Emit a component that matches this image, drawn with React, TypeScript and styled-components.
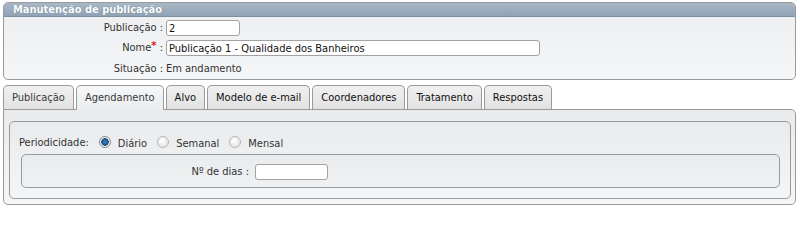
import styled, { createGlobalStyle } from "styled-components"

const GlobalStyle = createGlobalStyle`
  html, body {
    margin: 0;
    padding: 0;
    background: #ffffff;
  }
  body {
    font-family: "DejaVu Sans Condensed", "DejaVu Sans", sans-serif;
    font-size: 11px;
    color: #333333;
  }
  * {
    box-sizing: border-box;
  }
`

const tabs = [
  { label: "Publicação", visited: true },
  { label: "Agendamento", visited: true, active: true },
  { label: "Alvo" },
  { label: "Modelo de e-mail" },
  { label: "Coordenadores" },
  { label: "Tratamento" },
  { label: "Respostas" },
]

const periods = ["Diário", "Semanal", "Mensal"]

export default function App() {
  return (
    <Page>
      <GlobalStyle />

      {/* cabeçalho com os dados da publicação */}
      <Panel>
        <PanelHeader>Manutenção de publicação</PanelHeader>
        <FormGrid>
          <Label>Publicação :</Label>
          <Field $width="74px" defaultValue="2" />

          <Label>
            Nome<Required>*</Required> :
          </Label>
          <Field $width="374px" defaultValue="Publicação 1 - Qualidade dos Banheiros" />

          <Label $tall>Situação :</Label>
          <Value>Em andamento</Value>
        </FormGrid>
      </Panel>

      {/* abas */}
      <TabBar>
        {tabs.map((t) => (
          <Tab key={t.label} $active={t.active} $visited={t.visited}>
            {t.label}
          </Tab>
        ))}
      </TabBar>

      <TabPanel>
        <Fieldset>
          <RadioRow>
            <RowLabel>Periodicidade:</RowLabel>
            {periods.map((p, i) => (
              <RadioOption key={p}>
                <Radio type="radio" name="periodicidade" defaultChecked={i === 0} />
                <span>{p}</span>
              </RadioOption>
            ))}
          </RadioRow>

          <InnerBox>
            <InnerLabel>Nº de dias :</InnerLabel>
            <Field $width="73px" />
          </InnerBox>
        </Fieldset>
      </TabPanel>
    </Page>
  )
}

const Page = styled.div`
  width: 800px;
  padding: 2px 4px 0 3px;
`

const Panel = styled.div`
  border: 1px solid #9a9a9a;
  border-radius: 5px;
  background: linear-gradient(#eceef0, #f5f6f7);
  overflow: hidden;
`

const PanelHeader = styled.div`
  height: 14px;
  padding-left: 9px;
  line-height: 13px;
  font-weight: bold;
  color: #ffffff;
  text-shadow: 0 0 1px #5d7186;
  background: linear-gradient(#a9b8c6, #90a3b5);
  border-bottom: 1px solid #7b90a4;
`

const FormGrid = styled.div`
  display: grid;
  grid-template-columns: 159px auto;
  column-gap: 3px;
  row-gap: 4px;
  padding: 3px 0 2px 0;
  align-items: center;
`

const Label = styled.div<{ $tall?: boolean }>`
  text-align: right;
  height: ${(p) => (p.$tall ? "17px" : "16px")};
  line-height: ${(p) => (p.$tall ? "18px" : "16px")};
  white-space: nowrap;
  color: #333;
`

const Required = styled.span`
  color: #e0201c;
  font-weight: bold;
  position: relative;
  top: -2px;
`

const Value = styled.div`
  height: 17px;
  line-height: 18px;
  color: #333;
`

const Field = styled.input<{ $width: string }>`
  width: ${(p) => p.$width};
  height: 16px;
  padding: 0 2px;
  border: 1px solid #a2a2a2;
  border-radius: 3px;
  background: #ffffff;
  font-family: "DejaVu Sans Condensed", "DejaVu Sans", sans-serif;
  font-size: 11px;
  color: #111;
  outline: none;
`

const TabBar = styled.div`
  display: flex;
  gap: 2px;
  margin-top: 5px;
  align-items: flex-end;
  position: relative;
  z-index: 1;
`

const Tab = styled.div<{ $active?: boolean; $visited?: boolean }>`
  height: ${(p) => (p.$active ? "25px" : "24px")};
  margin-bottom: ${(p) => (p.$active ? "-1px" : "0")};
  padding: 0 8px;
  line-height: 23px;
  border: 1px solid #9a9a9a;
  border-bottom: none;
  border-radius: 5px 5px 0 0;
  white-space: nowrap;
  color: ${(p) => (p.$visited ? "#3a3a3a" : "#111")};
  background: ${(p) =>
    p.$active ? "linear-gradient(#f6f7f8, #eaecee)" : "linear-gradient(#f0f0f0, #e2e2e2)"};
`

const TabPanel = styled.div`
  height: 96px;
  padding: 11px 4px 5px 5px;
  border: 1px solid #9a9a9a;
  border-radius: 0 5px 5px 5px;
  background: linear-gradient(#e9ebed, #f5f6f7);
`

const Fieldset = styled.div`
  height: 78px;
  padding: 10px 10px 0 9px;
  border: 1px solid #9a9a9a;
  border-radius: 5px;
  background: linear-gradient(#e9ebed, #f4f5f6);
`

const RadioRow = styled.div`
  display: flex;
  align-items: center;
  height: 21px;
  margin-bottom: 1px;
`

const RowLabel = styled.span`
  color: #333;
  margin-right: 10px;
`

const RadioOption = styled.label`
  display: flex;
  align-items: center;
  gap: 7px;
  margin-right: 10px;
  color: #333;
  padding-top: 2px;
`

const Radio = styled.input`
  appearance: none;
  margin: 0;
  width: 12px;
  height: 12px;
  border-radius: 50%;
  border: 1px solid #b4b4b4;
  background: radial-gradient(circle at 40% 35%, #ffffff, #dcdcdc);
  position: relative;
  top: -2px;

  &:checked {
    border-color: #8a8a8a;
    background: radial-gradient(
      circle at 50% 50%,
      #3f86c4 0,
      #1e5f98 2.5px,
      #1c4f7c 3.5px,
      #f4f4f4 4px,
      #d6d6d6 6px
    );
  }
`

const InnerBox = styled.div`
  display: grid;
  grid-template-columns: 227px auto;
  column-gap: 6px;
  align-items: center;
  height: 34px;
  margin-left: 2px;
  padding-top: 1px;
  border: 1px solid #9a9a9a;
  border-radius: 5px;
  background: linear-gradient(#e9ebed, #f0f1f2);
`

const InnerLabel = styled.span`
  text-align: right;
  color: #333;
`
